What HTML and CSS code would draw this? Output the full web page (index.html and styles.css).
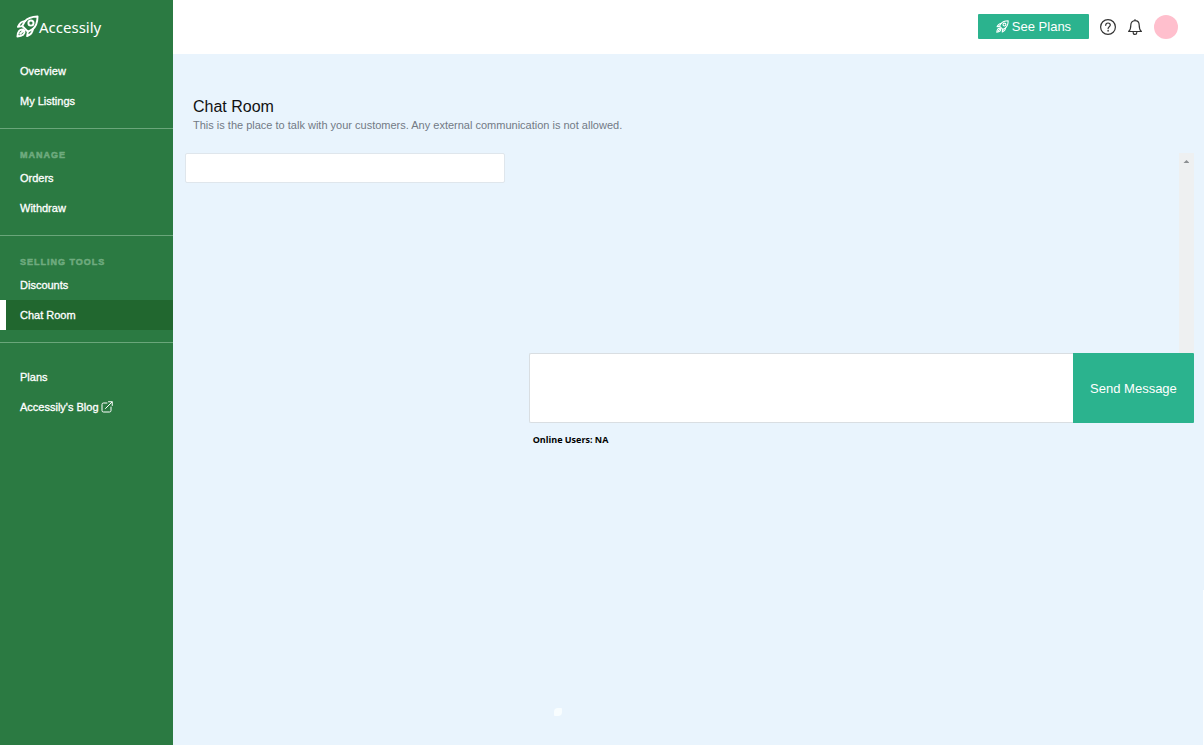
FILE: index.html
```html
<!DOCTYPE html>
<html lang="en">
  <head>
    <meta charset="utf-8">
    <meta name="viewport" content="width=device-width, initial-scale=1.0">
    <title>Chat Room - Accessily</title>
    <link rel="stylesheet" href="styles.css">
  </head>
  <body>
    <svg class="sprite" aria-hidden="true">
      <symbol id="rocket" viewBox="0 0 24 24">
        <path d="M22.5 1.500C16 1.600 12 3.200 9.200 6.600L6.500 11.500l6 6 4.900-2.700C20.800 12 22.400 8 22.500 1.500z"/>
        <circle cx="15.600" cy="8.400" r="2.700"/>
        <path d="M9.400 6.400C5.800 6.400 3.800 8.400 2 12.400l4.700-.8M17.600 14.600c0 3.600-2 5.600-6 7.400l.8-4.700"/>
        <path d="M7.600 15.200C4 14.400 1.800 17.200 1.500 22.500c5.300-.3 8.100-2.500 7.300-6.100M4.400 19.600l3.400-3.400"/>
      </symbol>
    </svg>

    <div class="layout">
      <aside class="sidebar">
        <a class="brand" href="#">
          <svg class="brand-icon" aria-hidden="true"><use href="#rocket"/></svg>
          <span>Accessily</span>
        </a>
        <nav>
          <div class="nav-group nav-group-first">
            <a class="nav-link" href="#">Overview</a>
            <a class="nav-link" href="#">My Listings</a>
          </div>
          <div class="nav-group">
            <h2 class="nav-title">MANAGE</h2>
            <a class="nav-link" href="#">Orders</a>
            <a class="nav-link" href="#">Withdraw</a>
          </div>
          <div class="nav-group">
            <h2 class="nav-title">SELLING TOOLS</h2>
            <a class="nav-link" href="#">Discounts</a>
            <a class="nav-link active" href="#">Chat Room</a>
          </div>
          <div class="nav-group nav-group-last">
            <a class="nav-link" href="#">Plans</a>
            <a class="nav-link" href="#">Accessily's Blog
              <svg class="external-icon" viewBox="0 0 24 24" aria-hidden="true">
                <path d="M12 4H5a3 3 0 0 0-3 3v12a3 3 0 0 0 3 3h12a3 3 0 0 0 3-3v-7M15 1.500h7.500V9M22 2L9 15"/>
              </svg>
            </a>
          </div>
        </nav>
      </aside>

      <div class="page">
        <header class="topbar">
          <button class="btn btn-plans" type="button">
            <svg class="btn-icon" aria-hidden="true"><use href="#rocket"/></svg>
            See Plans
          </button>
          <button class="icon-btn" type="button" aria-label="Help">
            <svg viewBox="0 0 16 16" aria-hidden="true">
              <circle cx="8" cy="8" r="7.400"/>
              <path d="M5.700 6.300C5.700 4.800 6.700 4 8 4s2.300.8 2.300 2.100c0 1.600-2.200 1.700-2.200 3.500"/>
              <path d="M8.100 11.400v.7" stroke-width="1.400"/>
            </svg>
          </button>
          <button class="icon-btn" type="button" aria-label="Notifications">
            <svg viewBox="0 0 16 16" aria-hidden="true">
              <path d="M8 1.600c-2.600 0-4.200 2-4.200 4.600 0 3.500-.8 5.200-2.200 6.300h12.800c-1.400-1.100-2.200-2.800-2.200-6.300C12.200 3.600 10.600 1.600 8 1.600zM8 .6v1M6.200 13.400c0 2.600 3.600 2.600 3.600 0"/>
            </svg>
          </button>
          <button class="avatar" type="button" aria-label="Account"></button>
        </header>

        <main class="content">
          <div class="heading">
            <h1>Chat Room</h1>
            <p>This is the place to talk with your customers. Any external communication is not allowed.</p>
          </div>
          <div class="chat">
            <div class="chat-users">
              <input class="search" type="text" aria-label="Search users">
            </div>
            <div class="chat-room">
              <div class="messages">
                <div class="scroll-track"><span class="scroll-arrow"></span></div>
              </div>
              <form class="composer">
                <textarea class="message" aria-label="Message"></textarea>
                <button class="btn btn-send" type="button">Send Message</button>
              </form>
              <p class="online">Online Users: NA</p>
            </div>
          </div>
        </main>
      </div>
    </div>

    <span class="loader"></span>
    <span class="drawer-edge"></span>
  </body>
</html>
```
FILE: styles.css
```css
* {
  box-sizing: border-box;
}

body {
  margin: 0;
  font-family: "Liberation Sans", Arial, sans-serif;
  color: #111;
  background-color: #e9f4fd;
}

h1, h2, p {
  margin: 0;
}

a {
  color: #fff;
  text-decoration: none;
}

button {
  padding: 0;
  border: none;
  font-family: inherit;
  cursor: pointer;
}

svg {
  fill: none;
  stroke: currentColor;
  stroke-linecap: round;
  stroke-linejoin: round;
}

.sprite {
  display: none;
}

.layout {
  display: flex;
  min-height: 100vh;
}

/* Sidebar */
.sidebar {
  flex: 0 0 173px;
  background-color: #2b7a42;
}

.brand {
  display: flex;
  align-items: center;
  height: 56px;
  padding: 0 0 3px 16px;
  font-family: "Noto Sans", "Open Sans", sans-serif;
  font-size: 15px;
}

.brand-icon {
  width: 23px;
  height: 23px;
  stroke-width: 2;
}

.nav-group {
  padding: 18px 0 12px;
  border-bottom: 1px solid #6aa67a;
}

.nav-group-first {
  padding-top: 0;
}

.nav-group-last {
  padding-top: 19px;
  border-bottom: none;
}

.nav-title {
  padding-left: 20px;
  color: #6fab7f;
  font-size: 9px;
  font-weight: bold;
  line-height: 16px;
  letter-spacing: 1px;
  -webkit-text-stroke: 0.5px #6fab7f;
}

.nav-link {
  display: flex;
  align-items: center;
  gap: 2px;
  height: 30px;
  padding-left: 20px;
  font-size: 11px;
  -webkit-text-stroke: 0.3px #fff;
}

.nav-link.active {
  padding-left: 14px;
  border-left: 6px solid #fff;
  background-color: #21672f;
}

.external-icon {
  width: 12px;
  height: 12px;
  stroke-width: 2;
}

/* Top bar */
.page {
  flex: 1;
  min-width: 0;
}

.topbar {
  display: flex;
  align-items: center;
  justify-content: flex-end;
  height: 54px;
  padding: 0 26px 1px;
  background-color: #fff;
}

.btn {
  background-color: #2bb38e;
  color: #fff;
  font-size: 13px;
}

.btn-plans {
  display: flex;
  align-items: center;
  justify-content: center;
  gap: 3px;
  width: 111px;
  height: 25px;
  margin-right: 11px;
  border-radius: 1px;
}

.btn-icon {
  width: 13px;
  height: 13px;
  stroke-width: 2;
}

.icon-btn {
  width: 16px;
  height: 16px;
  margin-right: 11px;
  background: none;
  color: #333;
}

.icon-btn svg {
  display: block;
  width: 16px;
  height: 16px;
  stroke-width: 1.2;
}

.avatar {
  width: 24px;
  height: 24px;
  border-radius: 50%;
  background-color: #ffbfcd;
}

/* Chat */
.heading {
  padding: 43px 20px 20px;
}

.heading h1 {
  font-size: 16px;
  font-weight: normal;
  line-height: 20px;
}

.heading p {
  color: #727a85;
  font-size: 11px;
  line-height: 16px;
}

.chat {
  display: flex;
}

.chat-users {
  width: 33.333%;
  padding: 0 12px;
}

.chat-room {
  width: 66.667%;
  padding: 0 10px 0 12px;
}

.search {
  display: block;
  width: 100%;
  height: 30px;
  padding: 4px 8px;
  border: 1px solid #dfe6ec;
  border-radius: 2px;
  background-color: #fff;
}

.messages {
  display: flex;
  justify-content: flex-end;
  height: 200px;
}

.scroll-track {
  width: 15px;
  padding-top: 7px;
  background-color: #eef0f1;
}

.scroll-arrow {
  display: block;
  width: 6px;
  height: 3px;
  margin: 0 auto;
  background-color: #8c8f92;
  clip-path: polygon(50% 0, 100% 100%, 0 100%);
}

.composer {
  display: flex;
  height: 70px;
}

.message {
  flex: 1;
  padding: 8px;
  border: 1px solid #d9dee2;
  border-right: none;
  border-radius: 2px 0 0 2px;
  background-color: #fff;
  resize: none;
}

.btn-send {
  width: 121px;
  border-radius: 0 1px 1px 0;
}

.online {
  padding: 9px 4px;
  color: #000;
  font-family: "Open Sans", sans-serif;
  font-size: 9px;
  font-weight: bold;
  line-height: 16px;
}

.loader {
  position: fixed;
  bottom: 29px;
  left: 46%;
  width: 8px;
  height: 8px;
  border-radius: 4px 1px;
  background-color: #f8fdff;
}

.drawer-edge {
  position: fixed;
  right: 0;
  bottom: 0;
  width: 1px;
  height: 155px;
  background-color: #fff;
}
```
